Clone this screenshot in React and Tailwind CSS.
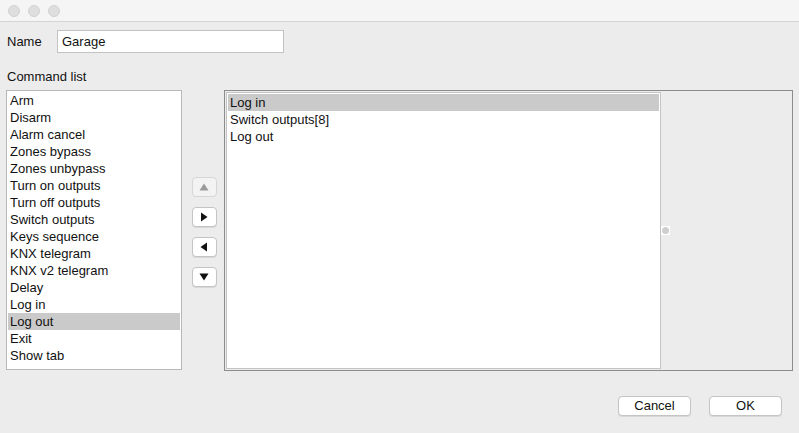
const available = [
    "Arm",
    "Disarm",
    "Alarm cancel",
    "Zones bypass",
    "Zones unbypass",
    "Turn on outputs",
    "Turn off outputs",
    "Switch outputs",
    "Keys sequence",
    "KNX telegram",
    "KNX v2 telegram",
    "Delay",
    "Log in",
    "Log out",
    "Exit",
    "Show tab",
];

const chosen = ["Log in", "Switch outputs[8]", "Log out"];

function Arrow({ dir, disabled }) {
    const points = {
        up: "0.5,8.5 5,1.5 9.5,8.5",
        down: "0.5,1.5 5,8.5 9.5,1.5",
        right: "2,0.5 8.5,5 2,9.5",
        left: "8,0.5 1.5,5 8,9.5",
    }[dir];
    return (
        <button
            className={`w-[25px] h-[20px] flex items-center justify-center rounded-[4px] border ${
                disabled
                    ? "border-[#d6d6d6] bg-[#f3f3f3]"
                    : "border-[#c4c4c4] bg-white shadow-[0_1px_0_#d8d8d8]"
            }`}
        >
            <svg width="10" height="10" viewBox="0 0 10 10">
                <polygon
                    points={points}
                    fill={disabled ? "#9a9a9a" : "#111"}
                />
            </svg>
        </button>
    );
}

function ListBox({ items, selected, className }) {
    return (
        <div className={`bg-white pt-[1px] ${className}`}>
            {items.map((item) => (
                <div
                    key={item}
                    className={`h-[17px] leading-[17px] pl-[2px] ${
                        item === selected ? "bg-[#cacaca]" : ""
                    }`}
                >
                    {item}
                </div>
            ))}
        </div>
    );
}

export default function App() {
    return (
        <div
            className="w-[799px] h-[433px] bg-[#ececec] flex flex-col text-[13px] text-[#111] overflow-hidden"
            style={{ fontFamily: '"Liberation Sans", Arial, sans-serif' }}
        >
            {/* Title bar */}
            <div className="h-[22px] shrink-0 bg-[#f5f5f5] border-b border-[#d4d4d4] flex items-center gap-[8px] pl-[8px]">
                <span className="w-[12px] h-[12px] rounded-full bg-[#dedede] border border-[#d2d2d2]" />
                <span className="w-[12px] h-[12px] rounded-full bg-[#dedede] border border-[#d2d2d2]" />
                <span className="w-[12px] h-[12px] rounded-full bg-[#dedede] border border-[#d2d2d2]" />
            </div>

            {/* Name */}
            <div className="flex items-center mt-[8px] pl-[7px]">
                <span className="w-[50px]">Name</span>
                <div className="w-[227px] h-[23px] bg-white border border-[#c2c2c2] pl-[4px] leading-[21px]">
                    Garage
                </div>
            </div>

            <div className="mt-[16px] pl-[7px] h-[16px] leading-[16px]">Command list</div>

            {/* Lists */}
            <div className="flex mt-[5px] pl-[6px] h-[281px]">
                <ListBox
                    items={available}
                    selected="Log out"
                    className="w-[176px] h-[280px] border border-[#b8b8b8] px-[1px]"
                />
                <div className="w-[42px] flex flex-col items-center pt-[87px] gap-[10px] pl-[2px]">
                    <Arrow dir="up" disabled />
                    <Arrow dir="right" />
                    <Arrow dir="left" />
                    <Arrow dir="down" />
                </div>
                <div className="w-[569px] h-[281px] border border-[#8c8c8c] flex p-[1px]">
                    <ListBox
                        items={chosen}
                        selected="Log in"
                        className="w-[435px] h-full border border-[#c4c4c4] p-[1px]"
                    />
                    <div className="flex-1 flex items-center">
                        <span className="w-[9px] h-[9px] flex items-center justify-center bg-white">
                            <span className="w-[7px] h-[7px] rounded-full bg-[#cfcfcf]" />
                        </span>
                    </div>
                </div>
            </div>

            {/* Buttons */}
            <div className="flex justify-end gap-[18px] pr-[17px] mt-[25px]">
                <button className="w-[73px] h-[20px] bg-white border border-[#c4c4c4] rounded-[4px] shadow-[0_1px_0_#d8d8d8] leading-[18px]">
                    Cancel
                </button>
                <button className="w-[73px] h-[20px] bg-white border border-[#c4c4c4] rounded-[4px] shadow-[0_1px_0_#d8d8d8] leading-[18px]">
                    OK
                </button>
            </div>
        </div>
    );
}
